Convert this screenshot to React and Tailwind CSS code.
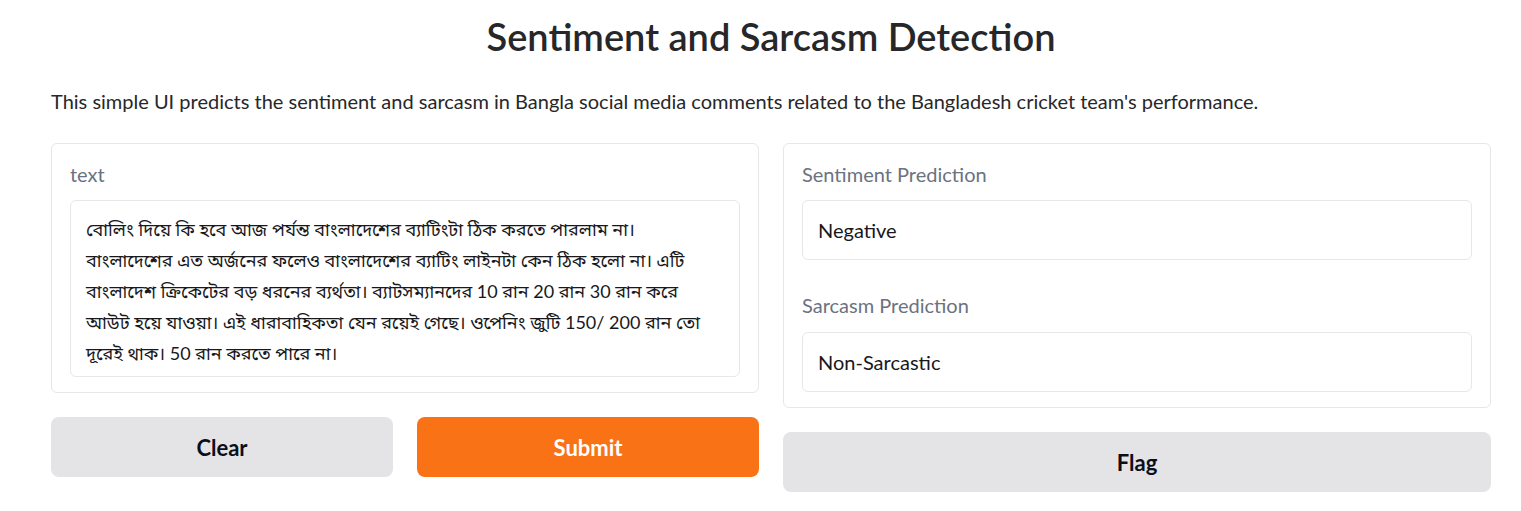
export default function App() {
  const font = { fontFamily: '"Lato", "Noto Sans", "Noto Sans Bengali", sans-serif' };

  return (
    <div className="w-[1521px] h-[511px] bg-white text-[#27272a] overflow-hidden" style={font}>
      <div className="w-[1440px] ml-[51px]">
        <h1 className="text-center text-[38px] font-semibold leading-none pt-[17px] h-[56px] text-[#27272a]">
          Sentiment and Sarcasm Detection
        </h1>
        <p className="mt-[31px] text-[20px] leading-[28px] text-[#27272a]">
          This simple UI predicts the sentiment and sarcasm in Bangla social media comments related to the Bangladesh cricket team's performance.
        </p>

        <div className="mt-[28px] flex gap-6 items-start">
          {/* Input column */}
          <div className="w-[708px] flex flex-col gap-6">
            <div className="border border-[#e5e7eb] rounded-md px-[18px] pt-[18px] pb-[15px]">
              <div className="text-[20px] leading-[24px] text-[#6b7280]">text</div>
              <div className="mt-[14px] border border-[#e5e7eb] rounded-md px-[15px] pt-[13px] pb-[10px] h-[177px] text-[18px] leading-[31px] text-[#18181b]">
                বোলিং দিয়ে কি হবে আজ পর্যন্ত বাংলাদেশের ব্যাটিংটা ঠিক করতে পারলাম না। বাংলাদেশের এত অর্জনের ফলেও বাংলাদেশের ব্যাটিং লাইনটা কেন ঠিক হলো না। এটি বাংলাদেশ ক্রিকেটের বড় ধরনের ব্যর্থতা। ব্যাটসম্যানদের 10 রান 20 রান 30 রান করে আউট হয়ে যাওয়া। এই ধারাবাহিকতা যেন রয়েই গেছে। ওপেনিং জুটি 150/ 200 রান তো দূরেই থাক। 50 রান করতে পারে না।
              </div>
            </div>
            <div className="flex gap-6">
              <button className="flex-1 h-[60px] rounded-lg bg-[#e4e4e7] text-[22px] font-bold text-[#0b0f19]">Clear</button>
              <button className="flex-1 h-[60px] rounded-lg bg-[#f97316] text-[22px] font-bold text-white">Submit</button>
            </div>
          </div>

          {/* Output column */}
          <div className="w-[708px] flex flex-col gap-6">
            <div className="border border-[#e5e7eb] rounded-md px-[18px] pt-[18px] pb-[15px]">
              <div className="text-[20px] leading-[24px] text-[#6b7280]">Sentiment Prediction</div>
              <div className="mt-[14px] h-[60px] border border-[#e5e7eb] rounded-md px-[15px] flex items-center text-[20px] text-[#18181b]">
                Negative
              </div>
              <div className="mt-[33px] text-[20px] leading-[24px] text-[#6b7280]">Sarcasm Prediction</div>
              <div className="mt-[15px] h-[60px] border border-[#e5e7eb] rounded-md px-[15px] flex items-center text-[20px] text-[#18181b]">
                Non-Sarcastic
              </div>
            </div>
            <button className="h-[60px] rounded-lg bg-[#e4e4e7] text-[22px] font-bold text-[#0b0f19]">Flag</button>
          </div>
        </div>
      </div>
    </div>
  );
}
